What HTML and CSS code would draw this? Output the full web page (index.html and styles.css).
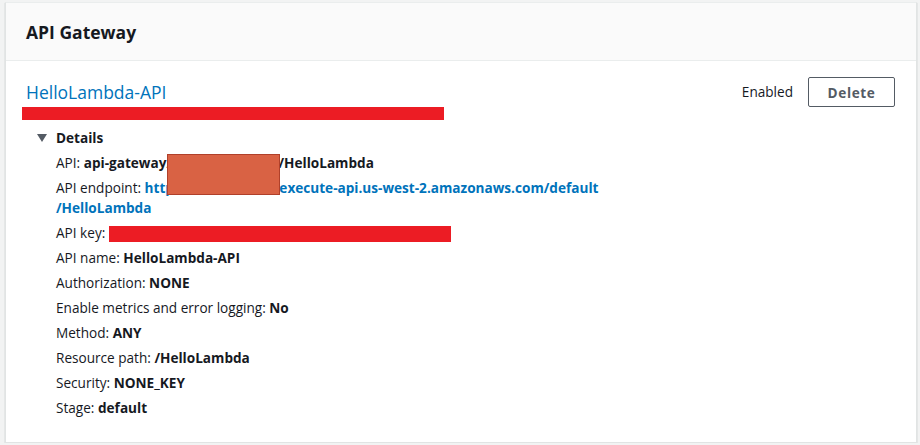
FILE: index.html
```html
<!DOCTYPE html>
<html lang="en">
<head>
<meta charset="utf-8">
<title>API Gateway</title>
<link rel="stylesheet" href="styles.css">
</head>
<body>
<div class="card">
  <div class="card-header">
    <h2 class="card-title">API Gateway</h2>
  </div>
  <div class="card-body">
    <div class="trigger-row">
      <a class="trigger-name" href="#">HelloLambda-API</a>
      <div class="trigger-actions">
        <span class="status">Enabled</span>
        <button class="btn">Delete</button>
      </div>
    </div>
    <div class="redact-bar"></div>
    <div class="details">
      <div class="details-toggle">
        <svg class="caret" width="10" height="8" viewBox="0 0 10 8"><polygon points="0,0 10,0 5,8" fill="#545b64"/></svg>
        <span>Details</span>
      </div>
      <div class="details-list">
        <div class="row">API: <b>api-gateway<span class="hidden-seg seg-api">/a1b2c3/*</span>/HelloLambda</b></div>
        <div class="row">API endpoint: <a class="link" href="#">htt<span class="hidden-seg seg-url">ps://a1b2c3.</span>execute-api.us-west-2.amazonaws.com/default<br>/HelloLambda</a></div>
        <div class="row">API key: <span class="redact-key"></span></div>
        <div class="row">API name: <b>HelloLambda-API</b></div>
        <div class="row">Authorization: <b>NONE</b></div>
        <div class="row">Enable metrics and error logging: <b>No</b></div>
        <div class="row">Method: <b>ANY</b></div>
        <div class="row">Resource path: <b>/HelloLambda</b></div>
        <div class="row">Security: <b>NONE_KEY</b></div>
        <div class="row">Stage: <b>default</b></div>
        <div class="redact-box"></div>
      </div>
    </div>
  </div>
</div>
</body>
</html>
```
FILE: styles.css
```css
* { box-sizing: border-box; }
html, body { margin: 0; }
body {
  background: #f2f3f3;
  padding: 2px 3px 0 5px;
  font-family: "Open Sans", "Noto Sans", sans-serif;
  font-size: 13.6px;
  color: #16191f;
}
.card {
  background: #ffffff;
  border: 1px solid #e1e4e4;
  border-top-color: #eaeded;
  box-shadow: 0 1px 1px 0 rgba(0, 28, 36, 0.3);
  height: 441px;
}
.card-header {
  background: #fafafa;
  border-bottom: 1px solid #eaeded;
  padding: 18px 20px 17px 20px;
}
.card-title {
  margin: 0;
  font-size: 17.5px;
  line-height: 22px;
  font-weight: 700;
}
.card-body {
  padding: 16px 20px 0 20px;
}
.trigger-row {
  display: flex;
  align-items: center;
  justify-content: space-between;
  height: 30px;
}
.trigger-name {
  color: #0073bb;
  text-decoration: none;
  font-size: 17.5px;
  line-height: 22px;
}
.trigger-actions {
  display: flex;
  align-items: center;
  gap: 15px;
  margin-right: 1px;
}
.status { line-height: 20px; }
.btn {
  font-family: inherit;
  font-size: 13.6px;
  font-weight: 700;
  letter-spacing: 0.6px;
  color: #545b64;
  background: #ffffff;
  border: 1px solid #545b64;
  border-radius: 2px;
  width: 87px;
  height: 30px;
  padding: 0;
}
.redact-bar {
  height: 13px;
  width: 422px;
  margin-left: -4px;
  background: #ec1c24;
}
.details {
  margin-top: 8px;
  padding-left: 11px;
}
.details-toggle {
  display: flex;
  align-items: center;
  gap: 9px;
  line-height: 20px;
  font-weight: 700;
}
.details-list {
  position: relative;
  padding-left: 19px;
  display: flex;
  flex-direction: column;
  gap: 5px;
  margin-top: 5px;
}
.row { line-height: 20px; }
.row b { font-weight: 700; }
.link {
  color: #0073bb;
  font-weight: 700;
  text-decoration: none;
}
.hidden-seg {
  display: inline-block;
  overflow: hidden;
  white-space: nowrap;
  vertical-align: top;
  height: 20px;
}
.seg-api { width: 112px; }
.seg-url { width: 114px; }
.redact-key {
  display: inline-block;
  width: 342px;
  height: 16px;
  background: #ec1c24;
  vertical-align: middle;
}
.redact-box {
  position: absolute;
  left: 130px;
  top: 1px;
  width: 113px;
  height: 41px;
  background: #d96244;
  border: 1px solid #b0402a;
}
```
